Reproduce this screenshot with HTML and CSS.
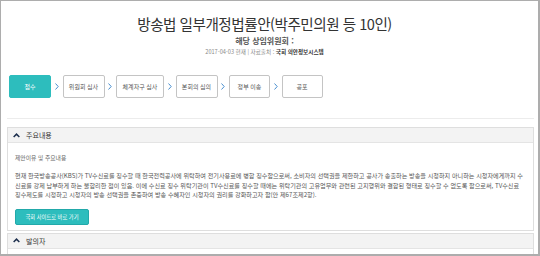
FILE: index.html
```html
<!DOCTYPE html>
<html lang="ko">
<head>
<meta charset="utf-8">
<link rel="stylesheet" href="styles.css">
</head>
<body>
<div class="frame">
  <header class="head">
    <h1 class="title">방송법 일부개정법률안(박주민의원 등 10인)</h1>
    <p class="committee">해당 상임위원회 :</p>
    <p class="source">2017-04-03 현재 | 자료출처 : <b>국회 의안정보시스템</b></p>
  </header>

  <section class="steps-box">
    <ol class="steps">
      <li class="step active w42">접수</li>
      <li class="chev"><svg viewBox="0 0 4 7" width="4" height="7"><path d="M0.5 0.5 L3.2 3.5 L0.5 6.5" fill="none" stroke="#4a8fd0" stroke-width="1"/></svg></li>
      <li class="step w42">위원회 심사</li>
      <li class="chev"><svg viewBox="0 0 4 7" width="4" height="7"><path d="M0.5 0.5 L3.2 3.5 L0.5 6.5" fill="none" stroke="#4a8fd0" stroke-width="1"/></svg></li>
      <li class="step w48">체계자구 심사</li>
      <li class="chev"><svg viewBox="0 0 4 7" width="4" height="7"><path d="M0.5 0.5 L3.2 3.5 L0.5 6.5" fill="none" stroke="#4a8fd0" stroke-width="1"/></svg></li>
      <li class="step w42">본회의 심의</li>
      <li class="chev"><svg viewBox="0 0 4 7" width="4" height="7"><path d="M0.5 0.5 L3.2 3.5 L0.5 6.5" fill="none" stroke="#4a8fd0" stroke-width="1"/></svg></li>
      <li class="step w41">정부 이송</li>
      <li class="chev"><svg viewBox="0 0 4 7" width="4" height="7"><path d="M0.5 0.5 L3.2 3.5 L0.5 6.5" fill="none" stroke="#4a8fd0" stroke-width="1"/></svg></li>
      <li class="step w41">공포</li>
    </ol>
  </section>

  <section class="panel">
    <div class="panel-head">
      <svg class="up" viewBox="0 0 8 6" width="7" height="5"><path d="M0.6 4.8 L4 1.4 L7.4 4.8" fill="none" stroke="#1d2f4d" stroke-width="1.8"/></svg>
      <span>주요내용</span>
    </div>
    <div class="panel-body">
      <p class="sub">제안이유 및 주요내용</p>
      <p class="para">현재 한국방송공사(KBS)가 TV수신료를 징수할 때 한국전력공사에 위탁하여 전기사용료에 병합 징수함으로써, 소비자의 선택권을 제한하고 공사가 송출하는 방송을 시청하지 아니하는 시청자에게까지 수신료를 강제 납부하게 하는 불합리한 점이 있음. 이에 수신료 징수 위탁기관이 TV수신료를 징수할 때에는 위탁기관의 고유업무와 관련된 고지행위와 결합된 형태로 징수할 수 없도록 함으로써, TV수신료 징수제도를 시정하고 시청자의 방송 선택권을 존중하여 방송 수혜자인 시청자의 권리를 강화하고자 함(안 제67조제2항).</p>
      <a class="btn" href="#">국회 사이트로 바로 가기</a>
    </div>
  </section>

  <section class="panel">
    <div class="panel-head">
      <svg class="up" viewBox="0 0 8 6" width="7" height="5"><path d="M0.6 4.8 L4 1.4 L7.4 4.8" fill="none" stroke="#1d2f4d" stroke-width="1.8"/></svg>
      <span>발의자</span>
    </div>
    <div class="panel-body"></div>
  </section>
</div>
</body>
</html>
```

FILE: styles.css
```css
* { box-sizing: border-box; }
html, body { margin: 0; padding: 0; background: #fff; }
body { font-family: "Noto Sans CJK KR", "Noto Sans", sans-serif; color: #333; }

.frame {
  width: 540px;
  height: 256px;
  overflow: hidden;
  border-top: 1px solid #adadad;
  border-left: 1px solid #adadad;
  border-right: 2px solid #adadad;
  border-bottom: 2px solid #adadad;
  padding: 0 4px 0 6px;
}

.head { text-align: center; padding: 15px 12px 0 0; }
.title {
  margin: 0;
  font-size: 14.6px;
  line-height: 16px;
  font-weight: 400;
  letter-spacing: -0.5px;
  color: #333;
}
.committee {
  margin: 4px 0 0;
  font-size: 8px;
  line-height: 9px;
  font-weight: 700;
  color: #555;
}
.source {
  margin: 4px 0 0;
  font-size: 5.6px;
  line-height: 6px;
  color: #888;
}
.source b { color: #333; font-weight: 700; }

.steps-box {
  margin-top: 20px;
  height: 44px;
  border-bottom: 1px solid #ececec;
  padding-left: 2px;
}
.steps {
  list-style: none;
  margin: 0;
  padding: 0;
  display: flex;
  align-items: center;
}
.step {
  height: 23px;
  border: 1px solid #c4c4c4;
  border-radius: 2px;
  display: flex;
  align-items: center;
  justify-content: center;
  font-size: 6px;
  color: #555;
}
.step.active { background: #2dbdbd; border-color: #2dbdbd; color: #fff; }
.w41 { width: 41px; }
.w42 { width: 42px; }
.w48 { width: 48px; }
.chev { width: 11.5px; display: flex; justify-content: center; }
.chev svg { display: block; }

.panel {
  border: 1px solid #dedede;
  margin-top: 8px;
}
.panel + .panel { margin-top: 2px; }
.panel-head {
  height: 15px;
  background: #f3f3f3;
  border-bottom: 1px solid #e4e4e4;
  display: flex;
  align-items: center;
  gap: 6px;
  padding-left: 5px;
  font-size: 7px;
  color: #333;
}
.up { display: block; }
.panel-body { padding: 11px 7px 5px 7px; }
.sub { margin: 0; font-size: 5.8px; line-height: 8px; color: #666; }
.para {
  margin: 9px 0 0;
  font-size: 6.13px;
  line-height: 9.6px;
  color: #555;
  word-break: break-all;
}
.btn {
  display: inline-flex;
  align-items: center;
  justify-content: center;
  margin-top: 6px;
  width: 74px;
  height: 16px;
  background: #2dbdbd;
  border: 1px solid #22a9aa;
  border-radius: 2px;
  color: #fff;
  font-size: 5.3px;
  text-decoration: none;
}
```
